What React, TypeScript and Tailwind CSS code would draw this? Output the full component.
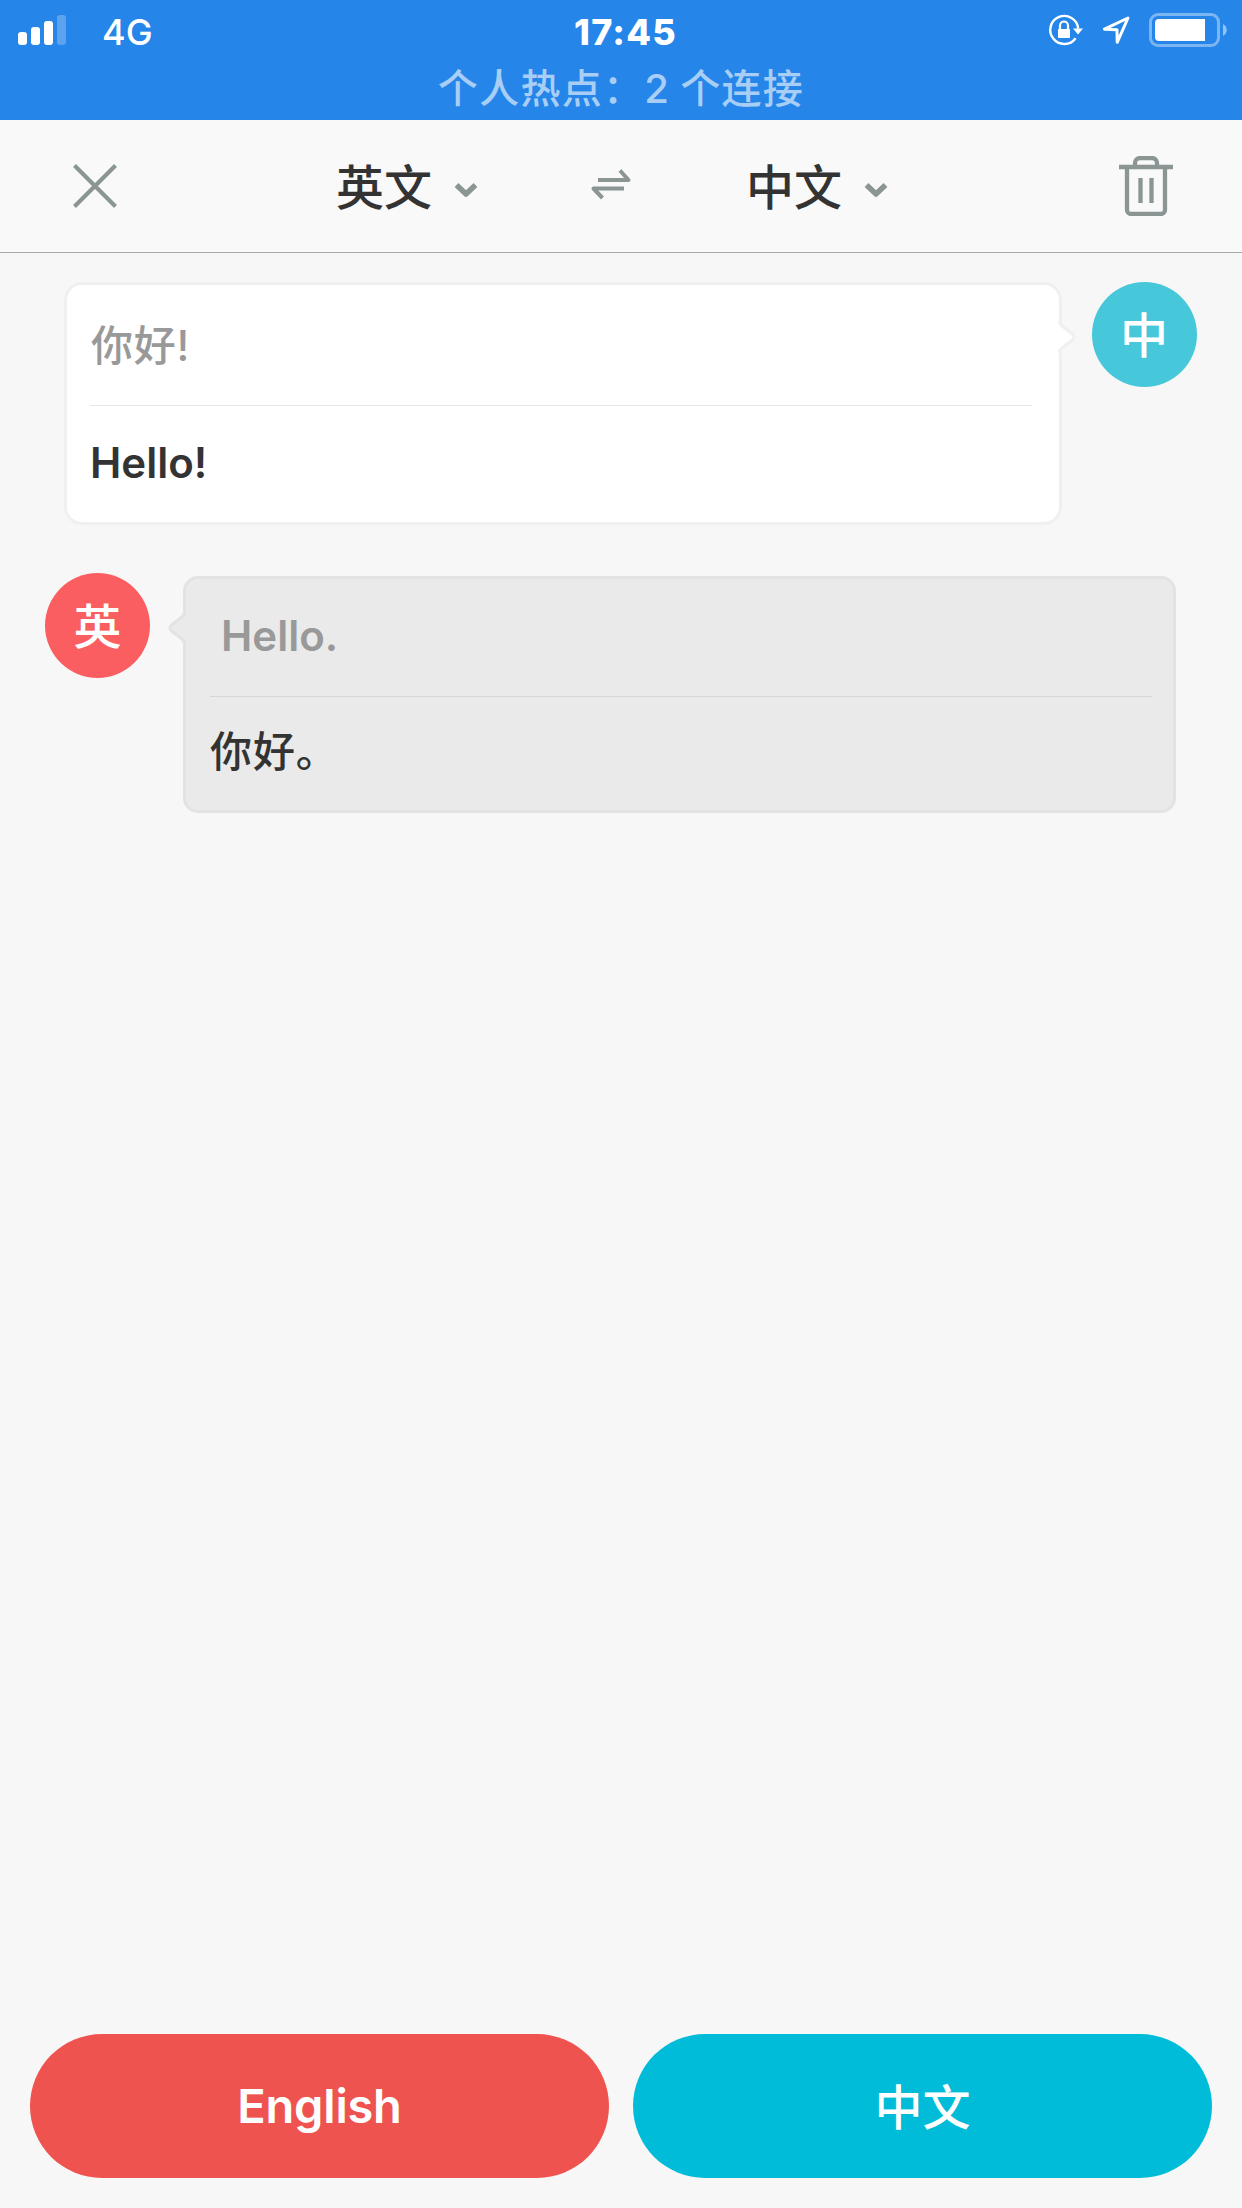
import React from 'react';

const StatusBar: React.FC = () => (
  <div className="h-[120px] bg-[#2585e9] text-white">
    <div className="h-[60px] grid grid-cols-3 items-center pl-[18px] pr-[14px]">
      <div className="flex items-center">
        <div className="flex items-end gap-1 h-[30px]">
          <span className="w-[9px] h-[13px] rounded-[3px] bg-white" />
          <span className="w-[9px] h-[18px] rounded-[3px] bg-white" />
          <span className="w-[9px] h-[24px] rounded-[3px] bg-white" />
          <span className="w-[9px] h-[30px] rounded-[3px] bg-white/25" />
        </div>
        <span className="ml-[36px] mt-[3px] text-[36px] leading-[36px] font-medium">4G</span>
      </div>

      <span className="mt-[3px] ml-[5px] text-center text-[36px] leading-[36px] font-extrabold tracking-[1.2px]">17:45</span>

      <div className="flex items-center justify-end">
        {/* Rotation lock */}
        <svg width="36" height="34" viewBox="0 0 36 34" fill="none" className="mr-[18px]">
          <path d="M28.600 25.200A14 14 0 1 1 31.200 15.500" stroke="white" strokeWidth="2.400" />
          <path d="M26 15.400h10L31 21.400z" fill="white" />
          <rect x="11" y="16" width="12" height="9" rx="1" fill="white" />
          <path d="M13 16.500V12.500a4 4 0 0 1 8 0V16.500" stroke="white" strokeWidth="2.200" />
        </svg>
        {/* Location */}
        <svg width="30" height="30" viewBox="0 0 30 30" fill="none" className="mr-[18px]">
          <path d="M27 3L3.400 14.200L16 14.800L16.200 27.300Z" stroke="white" strokeWidth="3" strokeLinejoin="round" />
        </svg>
        {/* Battery */}
        <svg width="79" height="34" viewBox="0 0 79 34" fill="none">
          <rect x="1.500" y="1.500" width="68" height="31" rx="7.500" stroke="white" strokeOpacity="0.400" strokeWidth="3" />
          <path d="M10 6H56V28H10a4 4 0 0 1-4-4V10a4 4 0 0 1 4-4z" fill="white" />
          <path d="M74 11c5 2.500 5 9.500 0 12z" fill="white" fillOpacity="0.500" />
        </svg>
      </div>
    </div>
    <p className="mt-[5px] text-center text-[40px] leading-[48px] tracking-[1.3px] [word-spacing:-2px] font-medium text-[#a8cef6] whitespace-nowrap">
      个人热点：2 个连接
    </p>
  </div>
);

const ChevronDown: React.FC = () => (
  <svg width="24" height="16" viewBox="0 0 24 16" fill="none">
    <path d="M2.500 3L12 12L21.500 3" stroke="#8a9594" strokeWidth="5.500" strokeLinejoin="round" />
  </svg>
);

const Header: React.FC = () => (
  <div className="h-[133px] flex items-center bg-[#f9f9f9] border-b border-[#aaaaaa]">
    <button className="ml-[73px]">
      <svg width="44" height="44" viewBox="0 0 44 44" fill="none">
        <path d="M1.500 1.500L42.500 42.500M42.500 1.500L1.500 42.500" stroke="#8a9594" strokeWidth="4.200" />
      </svg>
    </button>

    <button className="ml-[219px] flex items-center">
      <span className="mt-[3px] text-[48px] leading-[60px] font-medium text-[#333333]">英文</span>
      <span className="ml-[22px] mt-[7px]"><ChevronDown /></span>
    </button>

    <button className="ml-[112px] mb-[5px]">
      <svg width="42" height="34" viewBox="0 0 42 34" fill="none">
        <path d="M8 13H38.500L30 3.500M34 21.500H3.500L12.500 31" stroke="#8a9594" strokeWidth="4" strokeLinejoin="round" />
      </svg>
    </button>

    <button className="ml-[114px] flex items-center">
      <span className="mt-[3px] text-[48px] leading-[60px] font-medium text-[#333333]">中文</span>
      <span className="ml-[22px] mt-[7px]"><ChevronDown /></span>
    </button>

    <button className="ml-auto mr-[69px]">
      <svg width="54" height="60" viewBox="0 0 54 60" fill="none">
        <path d="M0 11H54M8 11V54a4 4 0 0 0 4 4H42a4 4 0 0 0 4-4V11M16 11V7a5 5 0 0 1 5-5H33a5 5 0 0 1 5 5V11M21.500 22V47M32.500 22V47" stroke="#8a9594" strokeWidth="4.300" />
      </svg>
    </button>
  </div>
);

const Conversation: React.FC = () => (
  <div className="flex-1 pt-[29px]">
    {/* Chinese speaker */}
    <div className="flex items-start pl-16 pr-[45px]">
      <div className="relative w-[998px] h-[243px] bg-white border-[3px] border-[#f0f0f0] rounded-[18px] pl-[23px] pr-[27px]">
        <div className="h-[121px] flex items-center border-b border-[#e6e6e6]">
          <span className="mt-px ml-px text-[42px] leading-[60px] font-medium text-[#999999] tracking-[0.7px]">你好!</span>
        </div>
        <div className="h-[114px] flex items-center">
          <span className="text-[42px] leading-[60px] font-semibold text-[#333333]">Hello!</span>
        </div>
        <svg width="20" height="34" viewBox="0 0 20 34" fill="none" className="absolute -right-[19px] top-[35px]">
          <path d="M0 2L1.500 4L14.500 14Q17.500 17 14.500 20L1.500 30L0 32Z" fill="white" />
          <path d="M1.500 1Q1.500 4 4 6L14.500 14Q17.500 17 14.500 20L4 28Q1.500 30 1.500 33" stroke="#f0f0f0" strokeWidth="3" />
        </svg>
      </div>
      <div className="ml-[30px] size-[105px] rounded-full bg-[#46c7da] flex items-center justify-center">
        <span className="mt-[2px] mr-px text-[48px] leading-[60px] font-medium text-white">中</span>
      </div>
    </div>

    {/* English speaker */}
    <div className="mt-12 flex items-start pl-[45px]">
      <div className="size-[105px] rounded-full bg-[#fb5e61] flex items-center justify-center">
        <span className="mt-[2px] text-[48px] leading-[60px] font-medium text-white">英</span>
      </div>
      <div className="relative ml-[33px] mt-[3px] w-[993px] h-[237px] bg-[#eaeaea] border-[3px] border-[#e3e3e3] rounded-[15px] pl-[24px] pr-[21px]">
        <div className="h-[118px] flex items-center border-b border-[#d6d6d6] pl-[11px]">
          <span className="mb-[3px] text-[42px] leading-[60px] font-semibold text-[#999999]">Hello.</span>
        </div>
        <div className="h-[110px] flex items-center">
          <span className="text-[42px] leading-[60px] font-medium text-[#333333] tracking-[0.9px]">你好。</span>
        </div>
        <svg width="20" height="34" viewBox="0 0 20 34" fill="none" className="absolute -left-[19px] top-[32px]">
          <path d="M20 2L18.500 4L5.500 14Q2.500 17 5.500 20L18.500 30L20 32Z" fill="#eaeaea" />
          <path d="M17.500 1Q17.500 4 15 6L4.500 14Q1.500 17 4.500 20L15 28Q17.500 30 17.500 33" stroke="#e3e3e3" strokeWidth="3" />
        </svg>
      </div>
    </div>
  </div>
);

const App: React.FC = () => {
  return (
    <div className="w-[1242px] h-[2208px] flex flex-col bg-[#f7f7f7] font-[Inter,'Noto_Sans_CJK_SC',sans-serif]">
      <StatusBar />
      <Header />
      <Conversation />

      {/* Speak buttons */}
      <div className="flex gap-6 px-[30px] pb-[30px]">
        <button className="flex-1 h-36 rounded-[72px] bg-[#ef5350] text-white text-[47px] font-semibold tracking-[-0.2px]">
          English
        </button>
        <button className="flex-1 h-36 rounded-[72px] bg-[#00bcd8] pt-[3px] text-white text-[48px] font-medium">
          中文
        </button>
      </div>
    </div>
  );
};

export default App;
